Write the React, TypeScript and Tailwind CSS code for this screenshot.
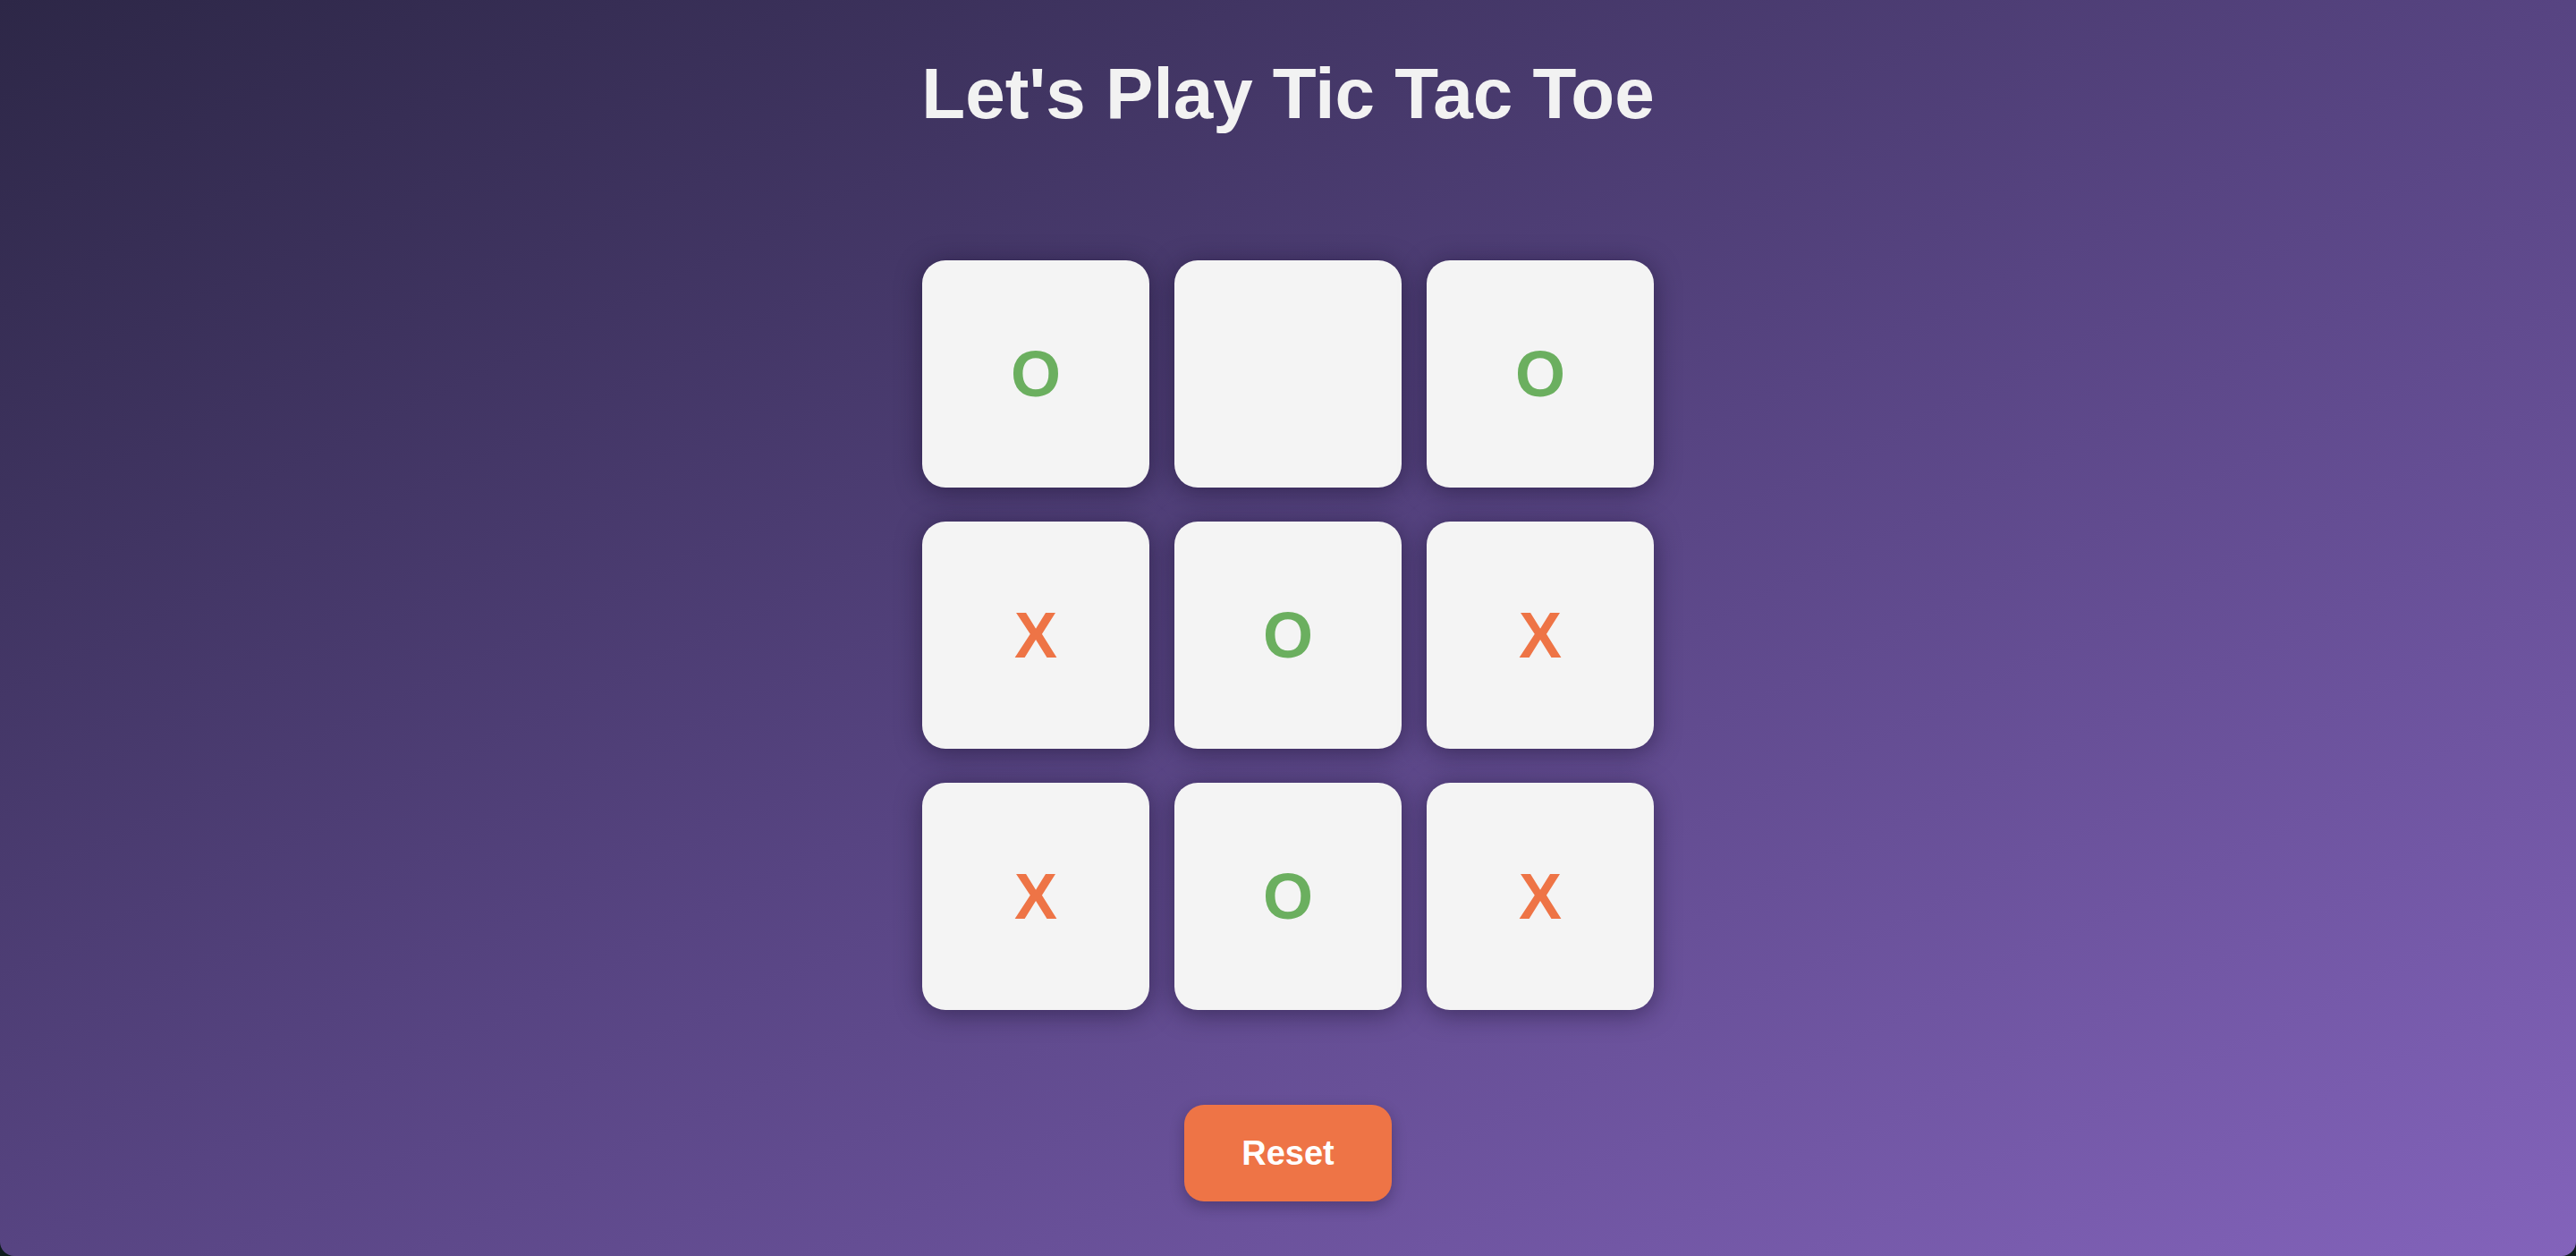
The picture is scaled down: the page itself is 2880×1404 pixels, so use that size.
const board: string[] = ["O", "", "O", "X", "O", "X", "X", "O", "X"];

function Cell({ value }: { value: string }) {
  return (
    <button
      className={`flex items-center justify-center w-[254px] h-[254px] rounded-[26px] bg-[#f4f4f4] shadow-[0_4px_28px_rgba(20,12,40,0.5)] text-[72px] font-bold leading-none ${
        value === "X" ? "text-[#ee7446]" : "text-[#6baf5f]"
      }`}
    >
      {value}
    </button>
  );
}

export default function App() {
  return (
    <main className="min-h-[1404px] bg-[#0f1c1e]">
      {/* game window */}
      <section className="flex flex-col items-center min-h-[1404px] rounded-b-[16px] bg-linear-to-br from-[#2d2747] via-[#574482] to-[#8363bb] font-['Liberation_Sans',Arial,sans-serif]">
        <h1 className="pt-[65px] text-[80px] leading-none font-bold text-[#f2f2f2]">
          Let's Play Tic Tac Toe
        </h1>

        {/* board */}
        <div className="grid grid-cols-3 gap-x-[28px] gap-y-[38px] mt-[146px]">
          {board.map((value, index) => (
            <Cell key={index} value={value} />
          ))}
        </div>

        <button className="mt-[106px] w-[232px] h-[108px] rounded-[22px] bg-[#ee7446] text-white text-[38px] font-bold shadow-[0_6px_16px_rgba(20,12,40,0.3)]">
          Reset
        </button>
      </section>
    </main>
  );
}
